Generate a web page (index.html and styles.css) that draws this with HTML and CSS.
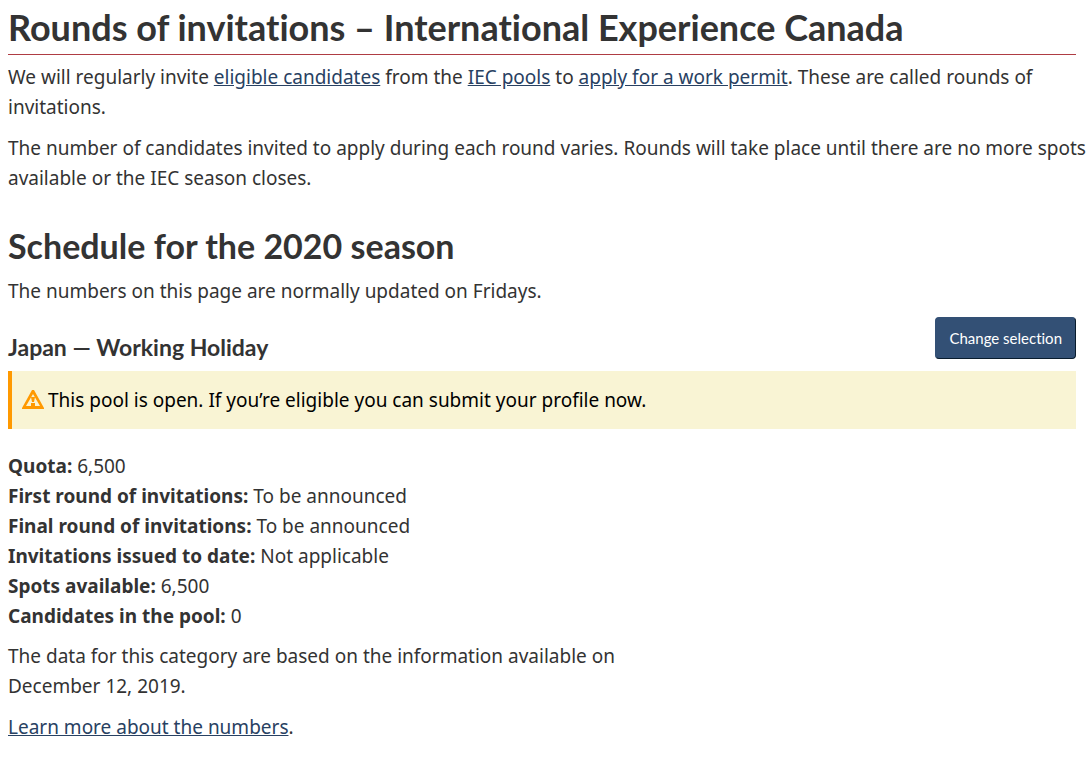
FILE: index.html
```html
<!DOCTYPE html>
<html lang="en">
<head>
<meta charset="utf-8">
<title>Rounds of invitations – International Experience Canada</title>
<link rel="stylesheet" href="styles.css">
</head>
<body>
<main class="page">
  <h1 class="title">Rounds of invitations – International Experience Canada</h1>
  <p class="text">We will regularly invite <a href="#eligible">eligible candidates</a> from the <a href="#pools">IEC pools</a> to <a href="#apply">apply for a work permit</a>. These are called rounds of invitations.</p>
  <p class="text text-wide">The number of candidates invited to apply during each round varies. Rounds will take place until there are no more spots available or the IEC season closes.</p>
  <h2 class="section-title">Schedule for the 2020 season</h2>
  <p class="text">The numbers on this page are normally updated on Fridays.</p>
  <div class="pool-header">
    <h3 class="pool-title">Japan — Working Holiday</h3>
    <button class="button" type="button">Change selection</button>
  </div>
  <div class="alert">
    <svg class="alert-icon" viewBox="0 0 22 20" aria-hidden="true">
      <path fill="#ff9900" fill-rule="evenodd" d="M10 0h2L22 18v1H0v-1ZM11 4 4 16H18Z"/>
      <path fill="#ff9900" d="M9 7h4l-1 5h-2zM9 13h4v3H9z"/>
    </svg>
    <p class="alert-text">This pool is open. If you’re eligible you can submit your profile now.</p>
  </div>
  <ul class="facts">
    <li><strong>Quota:</strong> 6,500</li>
    <li><strong>First round of invitations:</strong> To be announced</li>
    <li><strong>Final round of invitations:</strong> To be announced</li>
    <li><strong>Invitations issued to date:</strong> Not applicable</li>
    <li><strong>Spots available:</strong> 6,500</li>
    <li><strong>Candidates in the pool:</strong> 0</li>
  </ul>
  <p class="text note">The data for this category are based on the information available on December 12, 2019.</p>
  <p class="text"><a href="#numbers">Learn more about the numbers</a>.</p>
</main>
</body>
</html>
```
FILE: styles.css
```css
* { box-sizing: border-box; }
body {
  margin: 0;
  background: #fff;
  color: #333;
  font: 19px/30px "Noto Sans", sans-serif;
  font-variant-ligatures: none;
}
.page { padding: 7px 15px 8px 8px; }
.title, .section-title, .pool-title {
  margin: 0;
  font-family: Lato, sans-serif;
  font-weight: 700;
}
.title {
  padding-bottom: 7px;
  border-bottom: 1px solid #af3c43;
  font-size: 36px;
  line-height: 40px;
}
.text { margin: 0 0 11px; }
.title + .text { margin-top: 7px; }
.text-wide { margin-right: -13px; }
a { color: #284162; text-decoration: underline; }
.section-title {
  margin: 33px 0 10px;
  font-size: 34px;
  line-height: 40px;
}
.pool-header {
  display: flex;
  justify-content: space-between;
  align-items: flex-end;
}
.pool-title { font-size: 23px; line-height: 24px; }
.button {
  height: 42px;
  padding: 0 13px;
  border: 1px solid #335075;
  border-right-color: #091c2d;
  border-bottom-color: #091c2d;
  border-radius: 4px;
  background: #335075;
  color: #fff;
  font: 15px/20px Lato, sans-serif;
  font-variant-ligatures: none;
}
.alert {
  display: flex;
  align-items: center;
  gap: 4px;
  margin: 12px 0 22px;
  padding: 14px 10px;
  border-left: 4px solid #ff9900;
  background: #f9f4d4;
  color: #000;
}
.alert-icon { width: 22px; height: 20px; }
.alert-text { margin: 0; }
.facts { margin: 0 0 10px; padding: 0; list-style: none; }
.note { max-width: 640px; }
```
